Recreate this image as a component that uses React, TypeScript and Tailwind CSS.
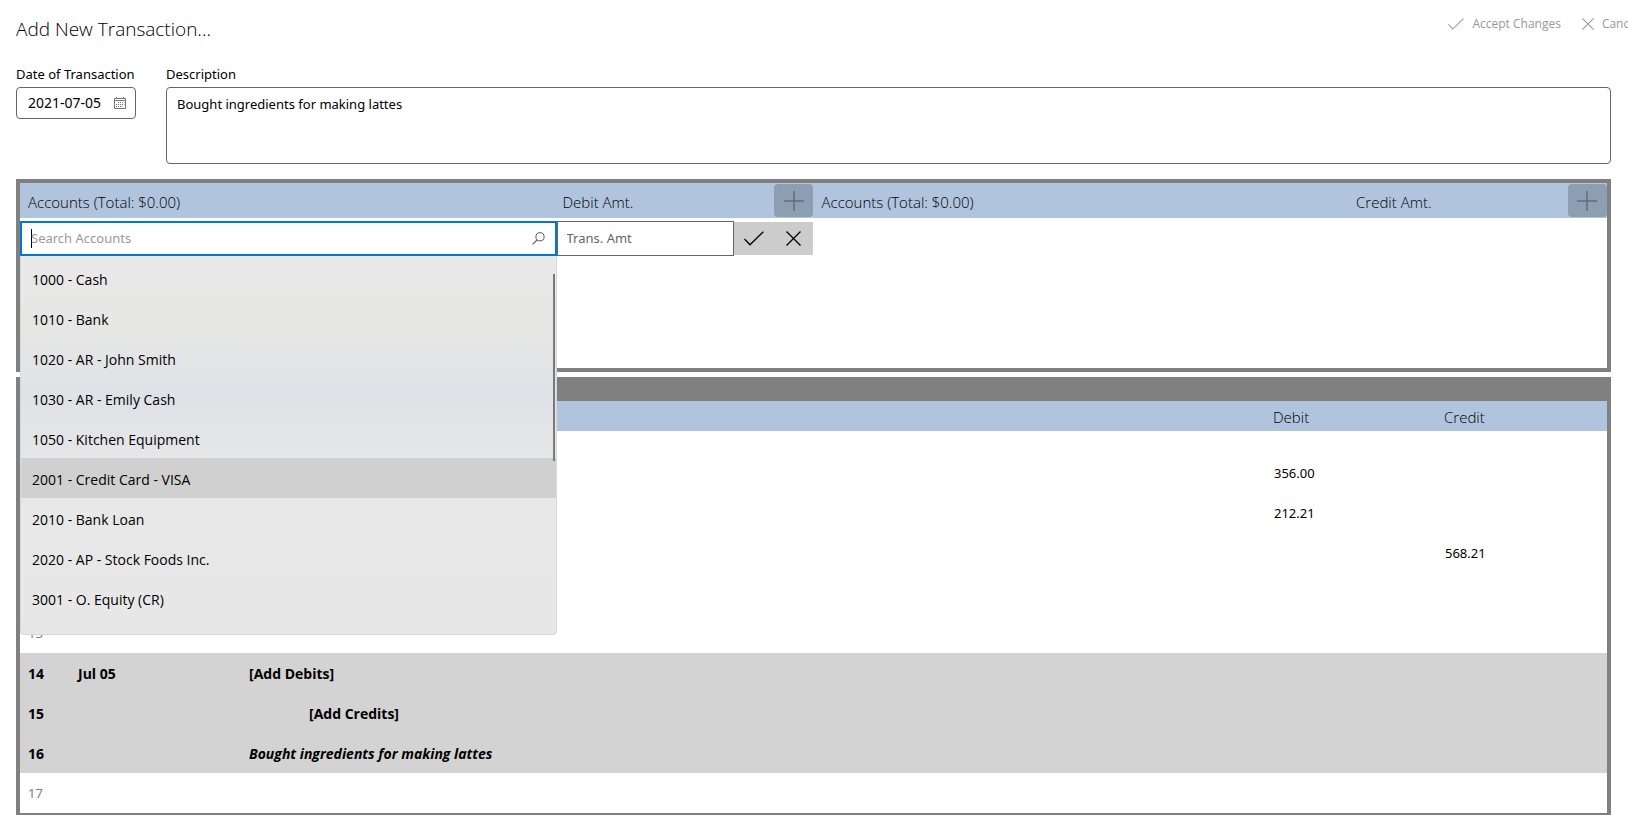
const accounts = [
  '1000 - Cash',
  '1010 - Bank',
  '1020 - AR - John Smith',
  '1030 - AR - Emily Cash',
  '1050 - Kitchen Equipment',
  '2001 - Credit Card - VISA',
  '2010 - Bank Loan',
  '2020 - AP - Stock Foods Inc.',
  '3001 - O. Equity (CR)'
];

const highlighted = '2001 - Credit Card - VISA';

type Entry = { line?: string; date?: string; text?: string; debit?: string; credit?: string; draft?: boolean; textStyle?: string };

const entries: Entry[] = [
  { debit: '356.00' },
  { debit: '212.21' },
  { credit: '568.21' },
  {},
  { line: '13' },
  { line: '14', date: 'Jul 05', text: '[Add Debits]', draft: true },
  { line: '15', text: '[Add Credits]', draft: true, textStyle: 'pl-17' },
  { line: '16', text: 'Bought ingredients for making lattes', draft: true, textStyle: 'pl-2 italic' },
  { line: '17' }
];

function CheckIcon({ className }: { className: string }) {
  return (
    <svg viewBox="0 0 20 15" fill="none" stroke="currentColor" strokeWidth="1.3" className={className} aria-hidden="true">
      <path d="M0.5 8 L6 13.8 L19.3 0.7" />
    </svg>
  );
}

function CrossIcon({ className }: { className: string }) {
  return (
    <svg viewBox="0 0 15 15" fill="none" stroke="currentColor" strokeWidth="1.3" className={className} aria-hidden="true">
      <path d="M0.5 0.5 L14.5 14.5 M14.5 0.5 L0.5 14.5" />
    </svg>
  );
}

function CalendarIcon() {
  return (
    <svg width="12" height="12" viewBox="0 0 12 12" fill="none" stroke="#777" className="shrink-0" aria-hidden="true">
      <path d="M0.5 1.5 H11.5 V11.5 H0.5 Z M0.5 3.5 H11.5 M2.5 0 V2 M9.5 0 V2" />
      <path d="M4 5.5 H10.5 M2 7.5 H10.5 M2 9.5 H8.5" strokeDasharray="1 1" />
    </svg>
  );
}

function SearchIcon() {
  return (
    <svg width="13" height="13" viewBox="0 0 13 13" fill="none" stroke="#555" className="shrink-0" aria-hidden="true">
      <circle cx="8" cy="4.8" r="4.1" />
      <path d="M5.1 7.8 L0.6 12.4" strokeWidth="1.2" />
    </svg>
  );
}

function SideHeader({ amount, label }: { amount: string; label: string }) {
  return (
    <div className="grid h-[35px] grid-cols-[32fr_13fr_39px] items-center bg-[#b0c4de] font-['Open_Sans',sans-serif] text-[15px] font-light">
      <span className="pt-1 pl-2">Accounts (Total: $0.00)</span>
      <span className="pt-1 pl-[6px]">{amount}</span>
      <button type="button" aria-label={label} className="flex h-[33px] items-center justify-center rounded-sm bg-[#8d9db2] text-[#626d7c]">
        <svg width="20" height="20" viewBox="0 0 20 20" stroke="currentColor" strokeWidth="1.5" aria-hidden="true">
          <path d="M0 10 H20 M10 0 V20" />
        </svg>
      </button>
    </div>
  );
}

function AccountSearch() {
  return (
    <div className="relative">
      <div className="flex h-[35px] items-center border-2 border-[#0078d7] bg-white pr-[10px] pl-[9px]">
        <span className="h-[19px] w-px shrink-0 bg-black" />
        <input
          type="text"
          aria-label="Search Accounts"
          placeholder="Search Accounts"
          className="-ml-px min-w-0 flex-1 caret-transparent outline-none placeholder:text-[#999]"
        />
        <SearchIcon />
      </div>
      <div className="absolute inset-x-0 top-full z-10 h-[379px] overflow-hidden rounded-b border border-t-0 border-[#d8d8d8] bg-[linear-gradient(to_bottom,#e9e9e9_0,#e6e6e5_80px,#dfe2e6_140px,#e5e6e7_200px,#e8e8e8_250px,#e7e7e7_100%)] pt-[2px]">
        <ul>
          {accounts.map((account) => (
            <li key={account}>
              <button
                type="button"
                className={`block h-10 w-full px-[11px] pt-[3px] text-left font-['Open_Sans',sans-serif] text-sm ${account === highlighted ? 'bg-[#d0d0d0]' : ''}`}
              >
                {account}
              </button>
            </li>
          ))}
        </ul>
        <div className="absolute top-[18px] right-px h-[187px] w-[2px] bg-[#7a7a7a]" />
      </div>
    </div>
  );
}

export default function App() {
  return (
    <main className="h-screen overflow-hidden bg-white pr-[17px] pl-4 font-['Noto_Sans','Open_Sans',sans-serif] text-[13px] text-black">
      <header className="flex h-16 items-start justify-between">
        <h1 className="pt-[15px] font-['Open_Sans',sans-serif] text-[19px] leading-7 font-light">Add New Transaction...</h1>
        <div className="-mr-9 flex gap-[22px] pt-4 font-['Open_Sans',sans-serif] text-xs whitespace-nowrap text-[#999]">
          <button type="button" className="flex items-center gap-2">
            <CheckIcon className="h-3 w-4" />
            Accept Changes
          </button>
          <button type="button" className="-ml-px flex items-center gap-2">
            <CrossIcon className="h-3 w-3" />
            <span className="pr-2">Cancel</span>
          </button>
        </div>
      </header>

      <section className="flex gap-[30px]">
        <div className="w-[120px] shrink-0">
          <label htmlFor="date" className="block h-[23px] leading-5 whitespace-nowrap">Date of Transaction</label>
          <div className="flex h-8 items-center rounded-sm border border-[#666] pr-[9px] pl-[11px]">
            <input id="date" type="text" defaultValue="2021-07-05" className="min-w-0 flex-1 text-sm outline-none" />
            <CalendarIcon />
          </div>
        </div>
        <div className="flex-1">
          <label htmlFor="description" className="block h-[23px] leading-5">Description</label>
          <textarea
            id="description"
            defaultValue="Bought ingredients for making lattes"
            className="block h-[77px] w-full resize-none rounded-sm border border-[#666] px-[10px] py-[6px] leading-5 outline-none"
          />
        </div>
      </section>

      <section className="mt-[15px] grid h-[193px] grid-cols-2 border-4 border-[#808080]">
        <div>
          <SideHeader amount="Debit Amt." label="Add debit" />
          <div className="mt-[3px] grid grid-cols-[minmax(0,32fr)_minmax(0,13fr)_39px] items-center">
            <AccountSearch />
            <div className="flex items-center">
              <input
                type="text"
                aria-label="Transaction amount"
                placeholder="Trans. Amt"
                className="h-[35px] min-w-0 flex-1 border border-[#666] px-[9px] pb-[2px] outline-none placeholder:text-[#666]"
              />
              <button type="button" aria-label="Accept debit" className="flex h-[33px] w-10 items-center justify-center bg-[#ccc]">
                <CheckIcon className="h-[15px] w-5" />
              </button>
            </div>
            <button type="button" aria-label="Discard debit" className="flex h-[33px] items-center justify-center bg-[#ccc]">
              <CrossIcon className="h-[15px] w-[15px]" />
            </button>
          </div>
        </div>
        <div>
          <SideHeader amount="Credit Amt." label="Add credit" />
        </div>
      </section>

      <section className="mt-[5px] border-4 border-t-[24px] border-[#808080]">
        <table className="w-full table-fixed border-collapse text-left">
          <colgroup>
            <col className="w-[50px]" />
            <col className="w-[171px]" />
            <col />
            <col className="w-[171px]" />
            <col className="w-[171px]" />
          </colgroup>
          <thead>
            <tr className="h-[30px] bg-[#b0c4de] font-['Open_Sans',sans-serif] text-[15px]">
              <td colSpan={3} />
              <th className="pt-[2px] pl-2 font-light">Debit</th>
              <th className="pt-[2px] pl-2 font-light">Credit</th>
            </tr>
          </thead>
          <tbody>
            <tr className="h-[22px]">
              <td colSpan={5} />
            </tr>
            {entries.map((entry, index) => (
              <tr key={index} className={entry.draft ? "h-10 bg-[#d3d3d3] font-['Open_Sans',sans-serif] text-sm font-bold" : 'h-10'}>
                <td className={entry.draft ? 'pt-[2px] pl-2' : 'pt-[2px] pl-2 text-[#808080]'}>{entry.line}</td>
                <td className="pt-[2px] pl-2">{entry.date}</td>
                <td className={`pt-[2px] ${entry.textStyle ?? 'pl-2'}`}>{entry.text}</td>
                <td className="pt-[2px] pl-[9px]">{entry.debit}</td>
                <td className="pt-[2px] pl-[9px]">{entry.credit}</td>
              </tr>
            ))}
          </tbody>
        </table>
      </section>
    </main>
  );
}
